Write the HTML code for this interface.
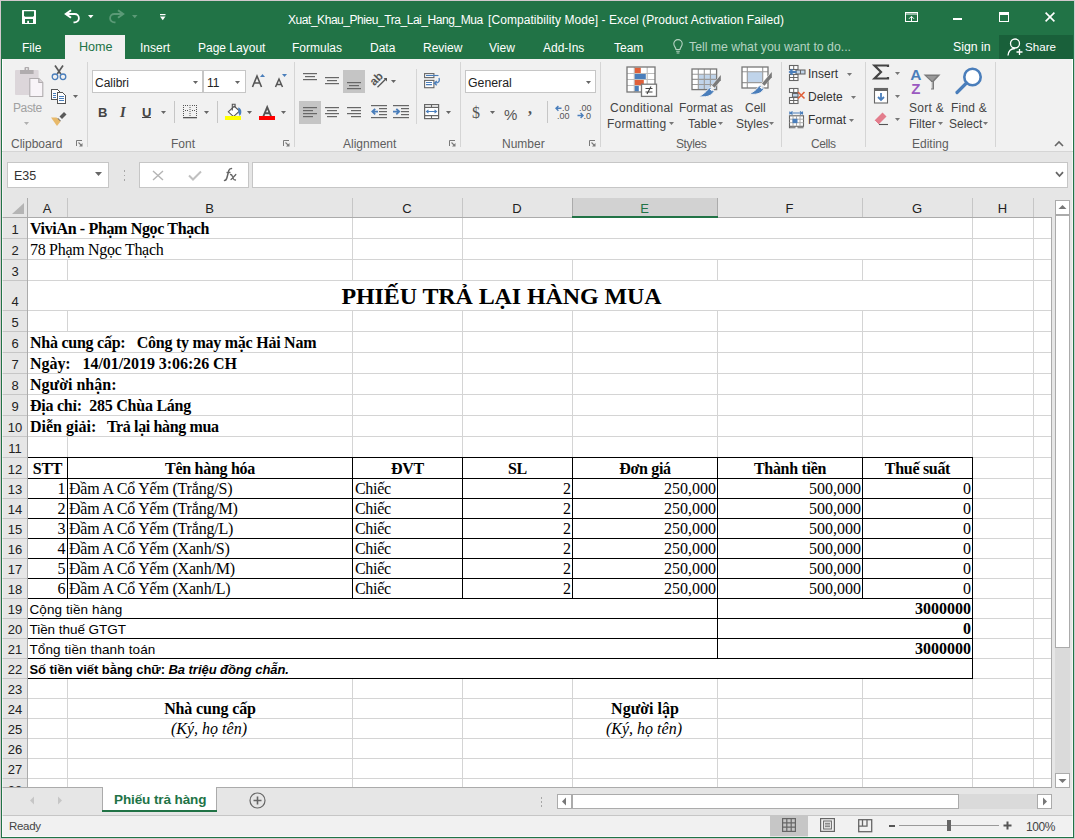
<!DOCTYPE html><html><head><meta charset='utf-8'><style>
*{margin:0;padding:0;box-sizing:border-box}
html,body{width:1075px;height:839px;overflow:hidden;background:#d1c9cd}
body{position:relative;font-family:"Liberation Sans",sans-serif;}
div{position:absolute;white-space:pre;line-height:1}
.ui{font:12px "Liberation Sans",sans-serif;color:#444}
.s{font-family:"Liberation Serif",serif;font-size:16px;color:#000}
.b{font-weight:bold}
.i{font-style:italic}
svg{position:absolute;overflow:visible}
</style></head><body>
<div style="left:1px;top:1px;width:1073px;height:837px;background:#217346"></div>
<div style="left:2px;top:59px;width:1071px;height:92px;background:#f1f1f1"></div>
<div style="left:2px;top:151px;width:1071px;height:1px;background:#d5d5d5"></div>
<div style="left:2px;top:152px;width:1071px;height:46px;background:#e6e6e6"></div>
<div style="left:2px;top:198px;width:1071px;height:19px;background:#e6e6e6"></div>
<div style="left:28px;top:218px;width:1023px;height:569px;background:#fff"></div>
<div style="left:2px;top:218px;width:25px;height:569px;background:#e6e6e6"></div>
<div style="left:1052px;top:198px;width:21px;height:589px;background:#e6e6e6"></div>
<div style="left:2px;top:787px;width:1071px;height:28px;background:#e6e6e6"></div>
<div style="left:2px;top:815px;width:1071px;height:1px;background:#c6c6c6"></div>
<div style="left:2px;top:816px;width:1071px;height:21px;background:#f1f1f1"></div>
<svg style="left:22px;top:10px" width="14" height="14" viewBox="0 0 14 14"><rect x="0" y="0" width="14" height="14" rx="0.6" fill="#fff"/><path d="M2 1.2h10v4.6l-1 1H3l-1-1z" fill="#217346"/><rect x="3" y="9" width="8" height="4" fill="#217346"/><rect x="5.2" y="10.8" width="1.8" height="2.4" fill="#fff"/></svg>
<svg style="left:64px;top:9px" width="17" height="15" viewBox="0 0 17 15"><path d="M7 1.2 1.8 5 7 8.8" fill="none" stroke="#fff" stroke-width="2"/><path d="M2 5h8.7a4.2 4.2 0 0 1 0 8.4H9.5" fill="none" stroke="#fff" stroke-width="1.8"/></svg>
<svg style="left:88px;top:15px" width="6" height="4"><polygon points="0,0 5.5,0 2.75,3.2" fill="#fff"/></svg>
<svg style="left:108px;top:9px" width="17" height="15" viewBox="0 0 17 15"><path d="M10 1.2 15.2 5 10 8.8" fill="none" stroke="#5b9a77" stroke-width="2"/><path d="M15 5H6.3a4.2 4.2 0 0 0 0 8.4H7.5" fill="none" stroke="#5b9a77" stroke-width="1.8"/></svg>
<svg style="left:132px;top:15px" width="6" height="4"><polygon points="0,0 5.5,0 2.75,3.2" fill="#5b9a77"/></svg>
<svg style="left:160px;top:14px" width="6" height="7"><rect x="0" y="0" width="5.5" height="1.2" fill="#fff"/><polygon points="0,2.6 5.5,2.6 2.75,6.2" fill="#fff"/></svg>
<div class="ui" style="left:288px;top:13px;color:#fff;font-size:12px;letter-spacing:-0.45px">Xuat_Khau_Phieu_Tra_Lai_Hang_Mua</div>
<div class="ui" style="left:488px;top:13px;color:#fff;font-size:12px;letter-spacing:0.07px">[Compatibility Mode] - Excel (Product Activation Failed)</div>
<svg style="left:905px;top:12px" width="13" height="10" viewBox="0 0 13 10"><rect x="0.5" y="0.5" width="12" height="9" fill="none" stroke="#fff"/><path d="M0.5 2h12" stroke="#fff"/><path d="M6.5 9.5V4.5M4 6.8 6.5 4.3 9 6.8" fill="none" stroke="#fff"/></svg>
<div style="left:953px;top:18px;width:9px;height:2px;background:#fff"></div>
<svg style="left:999px;top:12px" width="10" height="10" viewBox="0 0 10 10"><rect x="0.5" y="0.5" width="9" height="9" fill="none" stroke="#fff"/><rect x="0" y="0" width="10" height="3" fill="#fff"/></svg>
<svg style="left:1045px;top:12px" width="10" height="10" viewBox="0 0 10 10"><path d="M0.6 0.6 9.4 9.4M9.4 0.6 0.6 9.4" stroke="#fff" stroke-width="1.6"/></svg>
<div style="left:65px;top:35px;width:60px;height:24px;background:#f1f1f1"></div>
<div class="ui" style="left:22px;top:41px;color:#fff;font-size:12px">File</div>
<div class="ui" style="left:79px;top:40px;color:#217346;font-size:12.6px">Home</div>
<div class="ui" style="left:140px;top:41px;color:#fff;font-size:12px">Insert</div>
<div class="ui" style="left:198px;top:41px;color:#fff;font-size:12px">Page Layout</div>
<div class="ui" style="left:292px;top:41px;color:#fff;font-size:12px">Formulas</div>
<div class="ui" style="left:370px;top:41px;color:#fff;font-size:12px">Data</div>
<div class="ui" style="left:423px;top:41px;color:#fff;font-size:12px">Review</div>
<div class="ui" style="left:489px;top:41px;color:#fff;font-size:12px">View</div>
<div class="ui" style="left:543px;top:41px;color:#fff;font-size:12px">Add-Ins</div>
<div class="ui" style="left:614px;top:41px;color:#fff;font-size:12px">Team</div>
<svg style="left:673px;top:39px" width="10" height="15" viewBox="0 0 10 15"><path d="M3 10.5C3 8.5 0.8 7.5 0.8 4.8a4.2 4.2 0 0 1 8.4 0C9.2 7.5 7 8.5 7 10.5z" fill="none" stroke="#b5d3c2" stroke-width="1.1"/><path d="M3.2 12.3h3.6M3.6 14h2.8" stroke="#b5d3c2" stroke-width="1.1"/></svg>
<div class="ui" style="left:689px;top:40px;color:#b5d3c2;font-size:12.3px">Tell me what you want to do...</div>
<div class="ui" style="left:953px;top:40px;color:#fff;font-size:12.3px">Sign in</div>
<div style="left:999px;top:35px;width:74px;height:24px;background:#19603a"></div>
<svg style="left:1007px;top:38px" width="16" height="18" viewBox="0 0 16 18"><circle cx="8" cy="5.5" r="4.5" fill="none" stroke="#fff" stroke-width="1.3"/><path d="M1 17.5C1.5 12.5 4 10.5 8 10.5" fill="none" stroke="#fff" stroke-width="1.3"/><path d="M9.5 14h6M12.5 11v6" stroke="#fff" stroke-width="1.3"/></svg>
<div class="ui" style="left:1025px;top:40px;color:#fff;font-size:11.6px">Share</div>
<div style="left:87px;top:62px;width:1px;height:85px;background:#d5d5d5"></div>
<div style="left:294px;top:62px;width:1px;height:85px;background:#d5d5d5"></div>
<div style="left:460px;top:62px;width:1px;height:85px;background:#d5d5d5"></div>
<div style="left:600px;top:62px;width:1px;height:85px;background:#d5d5d5"></div>
<div style="left:781px;top:62px;width:1px;height:85px;background:#d5d5d5"></div>
<div style="left:865px;top:62px;width:1px;height:85px;background:#d5d5d5"></div>
<div style="left:995px;top:62px;width:1px;height:85px;background:#d5d5d5"></div>
<div class="ui" style="left:11px;top:137px;color:#5e5e5e;letter-spacing:0px">Clipboard</div>
<div class="ui" style="left:171px;top:137px;color:#5e5e5e;letter-spacing:0px">Font</div>
<div class="ui" style="left:343px;top:137px;color:#5e5e5e;letter-spacing:0px">Alignment</div>
<div class="ui" style="left:502px;top:137px;color:#5e5e5e;letter-spacing:0px">Number</div>
<div class="ui" style="left:676px;top:137px;color:#5e5e5e;letter-spacing:-0.4px">Styles</div>
<div class="ui" style="left:811px;top:137px;color:#5e5e5e;letter-spacing:-0.4px">Cells</div>
<div class="ui" style="left:912px;top:137px;color:#5e5e5e;letter-spacing:0px">Editing</div>
<svg style="left:76px;top:140px" width="7" height="7" viewBox="0 0 7 7"><path d="M0.5 6V0.5H6" fill="none" stroke="#7a7a7a"/><path d="M2.5 2.5 5.5 5.5" stroke="#7a7a7a" stroke-width="1.1"/><polygon points="6.5,3 6.5,6.5 3,6.5" fill="#7a7a7a"/></svg>
<svg style="left:283px;top:140px" width="7" height="7" viewBox="0 0 7 7"><path d="M0.5 6V0.5H6" fill="none" stroke="#7a7a7a"/><path d="M2.5 2.5 5.5 5.5" stroke="#7a7a7a" stroke-width="1.1"/><polygon points="6.5,3 6.5,6.5 3,6.5" fill="#7a7a7a"/></svg>
<svg style="left:449px;top:140px" width="7" height="7" viewBox="0 0 7 7"><path d="M0.5 6V0.5H6" fill="none" stroke="#7a7a7a"/><path d="M2.5 2.5 5.5 5.5" stroke="#7a7a7a" stroke-width="1.1"/><polygon points="6.5,3 6.5,6.5 3,6.5" fill="#7a7a7a"/></svg>
<svg style="left:589px;top:140px" width="7" height="7" viewBox="0 0 7 7"><path d="M0.5 6V0.5H6" fill="none" stroke="#7a7a7a"/><path d="M2.5 2.5 5.5 5.5" stroke="#7a7a7a" stroke-width="1.1"/><polygon points="6.5,3 6.5,6.5 3,6.5" fill="#7a7a7a"/></svg>
<svg style="left:15px;top:67px" width="29" height="31" viewBox="0 0 29 31"><rect x="0" y="3" width="23.6" height="25" rx="1" fill="#dcd6da"/><path d="M5 3h13.6v4H5z" fill="#b0acae"/><rect x="9.5" y="0" width="4.6" height="4" rx="1" fill="#b0acae"/><rect x="11" y="1.2" width="1.6" height="1.6" fill="#f1f1f1"/><path d="M14.8 11.5h9l4 4v14h-13z" fill="#f8f4f8" stroke="#b0acae" stroke-width="1.1"/><path d="M23.8 11.5v4h4" fill="#dcd6da" stroke="#b0acae" stroke-width="1.1"/></svg>
<div class="ui" style="left:13px;top:101px;color:#a0a0a0;letter-spacing:-0.4px">Paste</div>
<svg style="left:24px;top:122px" width="5" height="3"><polygon points="0,0 5,0 2.5,3" fill="#b0b0b0"/></svg>
<svg style="left:51px;top:64px" width="16" height="17" viewBox="0 0 16 17"><path d="M4 1.5 9.8 10M12 1.5 6.2 10" stroke="#5a5a5a" stroke-width="1.7" fill="none"/><circle cx="4" cy="12.8" r="2.8" fill="none" stroke="#4a7ebb" stroke-width="1.3"/><circle cx="12" cy="12.8" r="2.8" fill="none" stroke="#4a7ebb" stroke-width="1.3"/></svg>
<svg style="left:51px;top:89px" width="16" height="15" viewBox="0 0 16 15" shape-rendering="crispEdges"><path d="M0.5 0.5h6l2 2v8H0.5z" fill="#fff" stroke="#555"/><rect x="2" y="4" width="3" height="1" fill="#4a7ebb"/><rect x="2" y="6" width="3" height="1" fill="#4a7ebb"/><rect x="2" y="8" width="3" height="1" fill="#4a7ebb"/><path d="M6.5 3.5h5l3 3v8h-8z" fill="#fff" stroke="#555"/><rect x="8" y="7" width="5" height="1" fill="#4a7ebb"/><rect x="8" y="9" width="5" height="1" fill="#4a7ebb"/><rect x="8" y="11" width="5" height="1" fill="#4a7ebb"/></svg>
<svg style="left:73px;top:95px" width="5" height="3"><polygon points="0,0 5,0 2.5,3" fill="#666"/></svg>
<svg style="left:51px;top:111px" width="17" height="16" viewBox="0 0 17 16"><path d="M8.5 5.5 13 1l2.5 2.5L11 8z" fill="#5a5a5a"/><path d="M7 7l2.8 2.8-1.5 1.5L5.5 8.5z" fill="#5a5a5a"/><path d="M0 6.5h5.5l4 4-3.5 4.5z" fill="#e8b96a"/></svg>
<div style="left:92px;top:70px;width:111px;height:23px;background:#fff;border:1px solid #c6c6c6"></div>
<div style="left:203px;top:70px;width:43px;height:23px;background:#fff;border:1px solid #c6c6c6"></div>
<div class="ui" style="left:95px;top:76px;font-size:12px;color:#222">Calibri</div>
<div class="ui" style="left:207px;top:76px;font-size:12px;color:#222">11</div>
<svg style="left:193px;top:81px" width="5" height="3"><polygon points="0,0 5,0 2.5,3" fill="#666"/></svg>
<svg style="left:235px;top:81px" width="5" height="3"><polygon points="0,0 5,0 2.5,3" fill="#666"/></svg>
<svg style="left:251px;top:73px" width="38" height="15" viewBox="0 0 38 15"><path d="M1.5 14 6 3l4.5 11M3.2 10h5.6" fill="none" stroke="#555" stroke-width="1.6"/><polygon points="9,4 14,4 11.5,1" fill="#4a7ebb"/><path d="M24.5 14 28 6l3.5 8M25.8 11.5h4.4" fill="none" stroke="#555" stroke-width="1.5"/><polygon points="31,1 36,1 33.5,4" fill="#4a7ebb"/></svg>
<div style="left:98px;top:105px;font:bold 13px 'Liberation Sans',sans-serif;color:#444">B</div>
<div style="left:120px;top:104px;font:italic bold 14.5px 'Liberation Serif',serif;color:#444">I</div>
<div style="left:142px;top:105px;font:bold 13px 'Liberation Sans',sans-serif;color:#444">U</div>
<div style="left:142px;top:117px;width:9px;height:1px;background:#444"></div>
<svg style="left:161px;top:111px" width="5" height="3"><polygon points="0,0 5,0 2.5,3" fill="#666"/></svg>
<div style="left:174px;top:101px;width:1px;height:22px;background:#c6c6c6"></div>
<svg style="left:183px;top:105px" width="14" height="14"><rect x="0" y="0" width="1" height="1" fill="#555"/><rect x="6.5" y="0" width="1" height="1" fill="#555"/><rect x="13" y="0" width="1" height="1" fill="#555"/><rect x="0" y="2" width="1" height="1" fill="#555"/><rect x="6.5" y="2" width="1" height="1" fill="#555"/><rect x="13" y="2" width="1" height="1" fill="#555"/><rect x="0" y="4" width="1" height="1" fill="#555"/><rect x="6.5" y="4" width="1" height="1" fill="#555"/><rect x="13" y="4" width="1" height="1" fill="#555"/><rect x="0" y="6" width="1" height="1" fill="#555"/><rect x="6.5" y="6" width="1" height="1" fill="#555"/><rect x="13" y="6" width="1" height="1" fill="#555"/><rect x="0" y="8" width="1" height="1" fill="#555"/><rect x="6.5" y="8" width="1" height="1" fill="#555"/><rect x="13" y="8" width="1" height="1" fill="#555"/><rect x="0" y="10" width="1" height="1" fill="#555"/><rect x="6.5" y="10" width="1" height="1" fill="#555"/><rect x="13" y="10" width="1" height="1" fill="#555"/><rect x="2" y="0" width="1" height="1" fill="#555"/><rect x="4" y="0" width="1" height="1" fill="#555"/><rect x="9" y="0" width="1" height="1" fill="#555"/><rect x="11" y="0" width="1" height="1" fill="#555"/><rect x="2" y="5" width="1" height="1" fill="#555"/><rect x="4" y="5" width="1" height="1" fill="#555"/><rect x="9" y="5" width="1" height="1" fill="#555"/><rect x="11" y="5" width="1" height="1" fill="#555"/><rect x="0" y="12" width="14" height="1.3" fill="#555"/></svg>
<svg style="left:204px;top:111px" width="5" height="3"><polygon points="0,0 5,0 2.5,3" fill="#666"/></svg>
<div style="left:217px;top:101px;width:1px;height:22px;background:#c6c6c6"></div>
<svg style="left:225px;top:103px" width="17" height="18" viewBox="0 0 17 18"><path d="M3.3 8.8 9.2 3.3 14.6 8 8.5 13.6z" fill="#fff" stroke="#555" stroke-width="1.1"/><path d="M7.3 7.5V1.2h2.8v3.4" fill="none" stroke="#555" stroke-width="1.1"/><path d="M13.2 4.6c2.5.5 3.8 3.2 2.8 6.5l-1.4 1.8-1.2-3.2z" fill="#4a7ebb"/><rect x="0" y="13" width="16" height="4" fill="#ffff00"/></svg>
<svg style="left:247px;top:111px" width="5" height="3"><polygon points="0,0 5,0 2.5,3" fill="#666"/></svg>
<svg style="left:259px;top:105px" width="17" height="16" viewBox="0 0 17 16"><path d="M4.3 11.5 8.2 2.2l3.9 9.3M5.6 8.3h5.2" fill="none" stroke="#555" stroke-width="1.9"/><rect x="0" y="11" width="16" height="4" fill="#ff0000"/></svg>
<svg style="left:281px;top:111px" width="5" height="3"><polygon points="0,0 5,0 2.5,3" fill="#666"/></svg>
<div style="left:343px;top:70px;width:22px;height:23px;background:#c5c5c5"></div>
<div style="left:299px;top:101px;width:22px;height:23px;background:#c5c5c5"></div>
<svg style="left:303px;top:73px" width="18" height="16"><rect x="0" y="0" width="14" height="1.2" fill="#676767"/><rect x="2" y="3" width="10" height="1.2" fill="#676767"/><rect x="0" y="6" width="14" height="1.2" fill="#676767"/></svg>
<svg style="left:325px;top:77px" width="18" height="16"><rect x="0" y="0" width="14" height="1.2" fill="#676767"/><rect x="2" y="3" width="10" height="1.2" fill="#676767"/><rect x="0" y="6" width="14" height="1.2" fill="#676767"/></svg>
<svg style="left:347px;top:82px" width="18" height="16"><rect x="0" y="0" width="14" height="1.2" fill="#676767"/><rect x="2" y="3" width="10" height="1.2" fill="#676767"/><rect x="0" y="6" width="14" height="1.2" fill="#676767"/></svg>
<svg style="left:303px;top:107px" width="18" height="16"><rect x="0" y="0" width="14" height="1.2" fill="#676767"/><rect x="0" y="3" width="10" height="1.2" fill="#676767"/><rect x="0" y="6" width="14" height="1.2" fill="#676767"/><rect x="0" y="9" width="10" height="1.2" fill="#676767"/></svg>
<svg style="left:325px;top:107px" width="18" height="16"><rect x="0" y="0" width="14" height="1.2" fill="#676767"/><rect x="2" y="3" width="10" height="1.2" fill="#676767"/><rect x="0" y="6" width="14" height="1.2" fill="#676767"/><rect x="2" y="9" width="10" height="1.2" fill="#676767"/></svg>
<svg style="left:347px;top:107px" width="18" height="16"><rect x="0" y="0" width="14" height="1.2" fill="#676767"/><rect x="4" y="3" width="10" height="1.2" fill="#676767"/><rect x="0" y="6" width="14" height="1.2" fill="#676767"/><rect x="4" y="9" width="10" height="1.2" fill="#676767"/></svg>
<svg style="left:371px;top:105px" width="17" height="14"><rect x="0" y="0" width="16" height="1.2" fill="#676767"/><rect x="8" y="3" width="8" height="1.2" fill="#676767"/><rect x="8" y="6" width="8" height="1.2" fill="#676767"/><rect x="8" y="9" width="8" height="1.2" fill="#676767"/><rect x="0" y="12" width="16" height="1.2" fill="#676767"/><path d="M7 6.6H1.5M4.2 3.8 1.3 6.6 4.2 9.4" fill="none" stroke="#4a7ebb" stroke-width="1.8"/></svg>
<svg style="left:393px;top:105px" width="17" height="14"><rect x="0" y="0" width="16" height="1.2" fill="#676767"/><rect x="8" y="3" width="8" height="1.2" fill="#676767"/><rect x="8" y="6" width="8" height="1.2" fill="#676767"/><rect x="8" y="9" width="8" height="1.2" fill="#676767"/><rect x="0" y="12" width="16" height="1.2" fill="#676767"/><path d="M0 6.6H6M3.3 3.8 6.2 6.6 3.3 9.4" fill="none" stroke="#4a7ebb" stroke-width="1.8"/></svg>
<svg style="left:366px;top:68px" width="24" height="24" viewBox="0 0 24 24"><text x="0" y="0" transform="translate(8.2,18.2) rotate(-45)" font-family="Liberation Sans" font-weight="bold" font-size="11.5" fill="#555">ab</text><path d="M11.5 19.3 19.8 11" fill="none" stroke="#555" stroke-width="1.3"/><polygon points="17.6,10 21,10 21,13.4" fill="#555"/></svg>
<svg style="left:391px;top:80px" width="5" height="3"><polygon points="0,0 5,0 2.5,3" fill="#666"/></svg>
<div style="left:416px;top:69px;width:1px;height:55px;background:#d5d5d5"></div>
<svg style="left:424px;top:73px" width="17" height="16" viewBox="0 0 17 16"><rect x="0.6" y="0.6" width="9.3" height="4" fill="#fff" stroke="#666" stroke-width="1.1"/><path d="M2 2.5h12.5" stroke="#4a7ebb" stroke-width="1.1"/><rect x="0.6" y="7.4" width="9.3" height="7.3" fill="#fff" stroke="#666" stroke-width="1.1"/><path d="M2 9.5h6M2 11.6h6" stroke="#4a7ebb" stroke-width="1.1"/><path d="M15 5c1 3 0 5-4 5.2M12.8 8 10.3 10.2 12.8 12.2" fill="none" stroke="#4a7ebb" stroke-width="1.3"/></svg>
<svg style="left:424px;top:104px" width="16" height="16" viewBox="0 0 16 16"><rect x="0.6" y="0.6" width="14" height="14" fill="#fff" stroke="#666" stroke-width="1.2"/><path d="M0.6 3.4h14M0.6 11.6h14M7.5 0.6v2.8M7.5 11.6v3" stroke="#666" stroke-width="1.1"/><path d="M2.5 7.5h10M4.5 5.8 2.5 7.5 4.5 9.2M10.5 5.8 12.5 7.5 10.5 9.2" fill="none" stroke="#4a7ebb" stroke-width="1.1"/></svg>
<svg style="left:446px;top:111px" width="5" height="3"><polygon points="0,0 5,0 2.5,3" fill="#666"/></svg>
<div style="left:465px;top:70px;width:131px;height:23px;background:#fff;border:1px solid #c6c6c6"></div>
<div class="ui" style="left:468px;top:76px;font-size:12.3px;color:#222">General</div>
<svg style="left:586px;top:81px" width="5" height="3"><polygon points="0,0 5,0 2.5,3" fill="#666"/></svg>
<div style="left:472px;top:104px;font:16px 'Liberation Serif',serif;color:#555">$</div>
<svg style="left:490px;top:111px" width="5" height="3"><polygon points="0,0 5,0 2.5,3" fill="#666"/></svg>
<div style="left:504px;top:106px;font:15px 'Liberation Sans',sans-serif;color:#555">%</div>
<div style="left:528px;top:100px;font:bold 16px 'Liberation Serif',serif;color:#555">,</div>
<div style="left:547px;top:101px;width:1px;height:22px;background:#c6c6c6"></div>
<svg style="left:555px;top:104px" width="16" height="15" viewBox="0 0 16 15"><path d="M6.5 4.3H1M3.4 1.9 1 4.3 3.4 6.7" fill="none" stroke="#4a7ebb" stroke-width="1.4"/><text x="7" y="7" font-family="Liberation Sans" font-size="9" fill="#555">.0</text><text x="2" y="14.5" font-family="Liberation Sans" font-size="9" fill="#555">.00</text></svg>
<svg style="left:577px;top:104px" width="16" height="15" viewBox="0 0 16 15"><text x="2" y="7" font-family="Liberation Sans" font-size="9" fill="#555">.00</text><path d="M0.5 11.5H6M3.6 9.1 6 11.5 3.6 13.9" fill="none" stroke="#4a7ebb" stroke-width="1.4"/><text x="6.5" y="14.5" font-family="Liberation Sans" font-size="9" fill="#555">.0</text></svg>
<svg style="left:626px;top:66px" width="32" height="32" viewBox="0 0 32 32"><rect x="1" y="1" width="28" height="25" fill="#fff"/><path d="M8.3 1v25M21.2 1v25M1 7.5h28M1 13.5h28M1 19.5h28" stroke="#bdbdbd" stroke-width="1.1"/><rect x="8.8" y="1.6" width="6" height="5.4" fill="#e0603a"/><rect x="8.8" y="8" width="11" height="5" fill="#4a7ebb"/><rect x="8.8" y="14" width="9" height="5" fill="#e0603a"/><rect x="8.8" y="20" width="4" height="5.5" fill="#4a7ebb"/><rect x="1" y="1" width="28" height="25" fill="none" stroke="#777" stroke-width="1.3"/><rect x="15.5" y="18.2" width="15" height="12.2" fill="#fff" stroke="#777" stroke-width="1.3"/><path d="M19.5 22.5h7M19.5 26h7M25 20.5 21 28" stroke="#444" stroke-width="1.1"/></svg>
<svg style="left:691px;top:68px" width="31" height="30" viewBox="0 0 31 30"><rect x="1" y="1" width="24.6" height="20.6" fill="#fff"/><rect x="7.5" y="6.5" width="18" height="15" fill="#c0d4ea"/><path d="M7.3 1v20.6M13.3 1v20.6M19.4 1v20.6M1 6.3h24.6M1 11.4h24.6M1 16.5h24.6" stroke="#9a9a9a" stroke-width="1.1"/><rect x="1" y="1" width="24.6" height="20.6" fill="none" stroke="#777" stroke-width="1.3"/><path d="M29.5 6.5 19 19.5l3.5 2.5L30 12z" fill="#f1f1f1"/><path d="M29.8 7 21 17.5l2.5 2.2 6.3-7.5z" fill="#7a7a7a"/><path d="M19.2 19.3c-2.5 1.5-3 3.5-5 5l-6.2 4.7 6.5-.3c3.5-.2 6.5-2 8.7-5.5z" fill="#4a7ebb" stroke="#f1f1f1" stroke-width="1"/><path d="M19 21.2c1 .2 2 .8 2.3 2" stroke="#fff" stroke-width="1.3" fill="none"/></svg>
<svg style="left:741px;top:66px" width="31" height="30" viewBox="0 0 31 30"><rect x="1" y="1" width="26" height="21" fill="#fff"/><rect x="6.5" y="6" width="15" height="10.5" fill="#c0d4ea"/><path d="M6.3 1v21M21.7 1v21M1 5.8h26M1 16.6h26" stroke="#9a9a9a" stroke-width="1.1"/><rect x="1" y="1" width="26" height="21" fill="none" stroke="#777" stroke-width="1.3"/><path d="M30.5 5.5 19 19l3.5 2.5 8-10z" fill="#f1f1f1"/><path d="M30.8 6 21 17.5l2.5 2.2 7.3-8.5z" fill="#7a7a7a"/><path d="M19.2 19.3c-2.5 1.5-3 3.5-5 5l-6.2 4.2 6.5-.3c3.5-.2 6.5-2 8.7-5.5z" fill="#4a7ebb" stroke="#f1f1f1" stroke-width="1"/><path d="M19 21.2c1 .2 2 .8 2.3 2" stroke="#fff" stroke-width="1.3" fill="none"/></svg>
<div class="ui" style="left:610px;top:101px;letter-spacing:0.3px">Conditional</div>
<div class="ui" style="left:607px;top:117px;letter-spacing:0.2px">Formatting</div>
<svg style="left:669px;top:122px" width="5" height="3"><polygon points="0,0 5,0 2.5,3" fill="#777"/></svg>
<div class="ui" style="left:679px;top:101px;">Format as</div>
<div class="ui" style="left:688px;top:117px;">Table</div>
<svg style="left:718px;top:122px" width="5" height="3"><polygon points="0,0 5,0 2.5,3" fill="#777"/></svg>
<div class="ui" style="left:745px;top:101px;">Cell</div>
<div class="ui" style="left:736px;top:117px;">Styles</div>
<svg style="left:769px;top:122px" width="5" height="3"><polygon points="0,0 5,0 2.5,3" fill="#777"/></svg>
<svg style="left:788px;top:64px" width="18" height="18" viewBox="0 0 18 18"><rect x="1.5" y="1.5" width="8.5" height="4" fill="#fff" stroke="#666" stroke-width="1.1"/><path d="M5.7 1.5v4" stroke="#666"/><rect x="1.5" y="10.5" width="8.5" height="6" fill="#fff" stroke="#666" stroke-width="1.1"/><path d="M1.5 13.5h8.5M5.7 10.5v6" stroke="#666"/><rect x="8" y="6" width="9" height="4" fill="#c0d4ea" stroke="#666" stroke-width="1.1"/><path d="M12.5 6v4" stroke="#666"/><path d="M8.5 8H2M4.5 5.3 1.8 8 4.5 10.7" fill="none" stroke="#4a7ebb" stroke-width="1.8"/></svg>
<svg style="left:788px;top:87px" width="18" height="18" viewBox="0 0 18 18"><rect x="1.5" y="1.5" width="8.5" height="4" fill="#fff" stroke="#666" stroke-width="1.1"/><path d="M5.7 1.5v4" stroke="#666"/><rect x="1.5" y="10.5" width="8.5" height="6" fill="#fff" stroke="#666" stroke-width="1.1"/><path d="M1.5 13.5h8.5M5.7 10.5v6" stroke="#666"/><rect x="4.5" y="6.5" width="5.5" height="3.5" fill="#c0d4ea" stroke="#666" stroke-width="1.1"/><path d="M10 5 16.5 11.5M16.5 5 10 11.5" stroke="#e0603a" stroke-width="1.6"/></svg>
<svg style="left:788px;top:111px" width="18" height="18" viewBox="0 0 18 18"><path d="M1.8 0.5v3M14.5 0.5v3M2.5 2h11.5M4.5 0.3 2.5 2 4.5 3.7M12 0.3 14 2 12 3.7" fill="none" stroke="#4a7ebb" stroke-width="1.1"/><rect x="1.5" y="4.8" width="14" height="10.5" fill="#fff" stroke="#666" stroke-width="1.1"/><path d="M1.5 8.2h14M1.5 11.7h14M5 4.8v10.5M8.5 4.8v10.5M12 4.8v10.5" stroke="#aaa" stroke-width="1"/><rect x="4.5" y="7.8" width="5" height="4.3" fill="#4a7ebb"/><path d="M1.5 15.3v1.5h6M9.5 16.8h6" stroke="#666" stroke-width="1.1" fill="none"/></svg>
<div class="ui" style="left:808px;top:67px;color:#333">Insert</div>
<div class="ui" style="left:808px;top:90px;color:#333">Delete</div>
<div class="ui" style="left:808px;top:113px;color:#333">Format</div>
<svg style="left:847px;top:73px" width="5" height="3"><polygon points="0,0 5,0 2.5,3" fill="#777"/></svg>
<svg style="left:851px;top:96px" width="5" height="3"><polygon points="0,0 5,0 2.5,3" fill="#777"/></svg>
<svg style="left:849px;top:119px" width="5" height="3"><polygon points="0,0 5,0 2.5,3" fill="#777"/></svg>
<svg style="left:873px;top:64px" width="16" height="16" viewBox="0 0 16 16"><path d="M15 3V1.5H1.5L8 8l-6.5 6.5H15V13" fill="none" stroke="#444" stroke-width="2.2"/></svg>
<svg style="left:895px;top:72px" width="5" height="3"><polygon points="0,0 5,0 2.5,3" fill="#777"/></svg>
<svg style="left:873px;top:87px" width="16" height="17" viewBox="0 0 16 17"><rect x="1.5" y="1.5" width="13" height="14.5" fill="#fff" stroke="#666" stroke-width="1.1"/><rect x="1" y="1" width="14" height="3" fill="#666"/><path d="M8 6v7M5 10 8 13 11 10" fill="none" stroke="#4a7ebb" stroke-width="1.8"/></svg>
<svg style="left:895px;top:95px" width="5" height="3"><polygon points="0,0 5,0 2.5,3" fill="#777"/></svg>
<svg style="left:873px;top:111px" width="16" height="15" viewBox="0 0 16 15"><path d="M1.5 9.5 9.5 1.5l4 4-8 8z" fill="#e37d8c"/><path d="M1.5 9.5l4 4" stroke="#f1f1f1" stroke-width="1"/><path d="M6 13.5h9" stroke="#555" stroke-width="1.1"/></svg>
<svg style="left:895px;top:118px" width="5" height="3"><polygon points="0,0 5,0 2.5,3" fill="#777"/></svg>
<svg style="left:910px;top:67px" width="32" height="28" viewBox="0 0 32 28"><text x="0.3" y="12.8" font-family="Liberation Sans" font-weight="bold" font-size="15.5" fill="#4a7ebb">A</text><text x="1.2" y="26.9" font-family="Liberation Sans" font-weight="bold" font-size="15" fill="#9b59c0">Z</text><path d="M13.5 7.5h17l-6.5 7v8h-3v-8z" fill="#7a7a7a"/><path d="M16.5 9h10.5l-4.7 5" fill="#999"/><rect x="21.2" y="15" width="1.2" height="6.5" fill="#f1f1f1"/></svg>
<svg style="left:954px;top:66px" width="30" height="30" viewBox="0 0 30 30"><circle cx="18.5" cy="11" r="8.2" fill="#fff" stroke="#4a7ebb" stroke-width="2.6"/><path d="M12.5 17 3 26.5" stroke="#4a7ebb" stroke-width="3.2" stroke-linecap="round"/></svg>
<div class="ui" style="left:909px;top:101px;letter-spacing:0.3px">Sort &amp;</div>
<div class="ui" style="left:909px;top:117px;">Filter</div>
<svg style="left:938px;top:122px" width="5" height="3"><polygon points="0,0 5,0 2.5,3" fill="#777"/></svg>
<div class="ui" style="left:951px;top:101px;letter-spacing:0.2px">Find &amp;</div>
<div class="ui" style="left:949px;top:117px;">Select</div>
<svg style="left:983px;top:122px" width="5" height="3"><polygon points="0,0 5,0 2.5,3" fill="#777"/></svg>
<svg style="left:1054px;top:140px" width="10" height="7"><path d="M1 6 5 2l4 4" fill="none" stroke="#666" stroke-width="1.6"/></svg>
<div style="left:7px;top:162px;width:102px;height:26px;background:#fff;border:1px solid #c6c6c6"></div>
<div class="ui" style="left:14px;top:169px;font-size:12.5px;color:#333">E35</div>
<svg style="left:95px;top:172px" width="7" height="4"><polygon points="0,0 7,0 3.5,4" fill="#666"/></svg>
<div style="left:123.5px;top:170px;width:1.5px;height:1.5px;background:#a6a6a6"></div>
<div style="left:123.5px;top:174.5px;width:1.5px;height:1.5px;background:#a6a6a6"></div>
<div style="left:123.5px;top:179px;width:1.5px;height:1.5px;background:#a6a6a6"></div>
<div style="left:139px;top:162px;width:110px;height:26px;background:#fff;border:1px solid #c6c6c6"></div>
<svg style="left:152px;top:170px" width="12" height="11"><path d="M1 1 11 10M11 1 1 10" stroke="#b4b4b4" stroke-width="1.4"/></svg>
<svg style="left:188px;top:170px" width="14" height="11"><path d="M1 5.5 5 9.5 13 1.5" fill="none" stroke="#c0c0c0" stroke-width="2"/></svg>
<svg style="left:222px;top:167px" width="16" height="15" viewBox="0 0 16 15"><path d="M2.5 13.5c1.5 0 2-1 2.5-3L6.8 3.5C7.3 2 8 1.5 9.5 1.5" fill="none" stroke="#666" stroke-width="1.5" stroke-linecap="round"/><path d="M4.5 5.5h4" stroke="#666" stroke-width="1.3"/><path d="M8.5 7.5c1 0 1.5.5 2 2l1 2.5c.5 1 1 1 2 1M9 12.5c1.5-1 3-3 4.8-5" fill="none" stroke="#666" stroke-width="1.3" stroke-linecap="round"/></svg>
<div style="left:252px;top:162px;width:816px;height:26px;background:#fff;border:1px solid #c6c6c6"></div>
<svg style="left:1055px;top:171px" width="9" height="7"><path d="M1 1.2 4.5 5 8 1.2" fill="none" stroke="#666" stroke-width="1.8"/></svg>
<div class="s" style="left:30px;top:221px;letter-spacing:-0.35px;font-weight:bold;">ViviAn - Phạm Ngọc Thạch</div>
<div class="s" style="left:30px;top:242px;letter-spacing:-0.3px;">78 Phạm Ngọc Thạch</div>
<div class="s" style="left:29px;width:945px;text-align:center;top:284px;font-size:24px;font-weight:bold;letter-spacing:-0.1px">PHIẾU TRẢ LẠI HÀNG MUA</div>
<div class="s" style="left:30px;top:335px;letter-spacing:-0.25px;font-weight:bold;">Nhà cung cấp:   Công ty may mặc Hải Nam</div>
<div class="s" style="left:30px;top:356px;letter-spacing:-0.05px;font-weight:bold;">Ngày:   14/01/2019 3:06:26 CH</div>
<div class="s" style="left:30px;top:377px;font-weight:bold;">Người nhận:</div>
<div class="s" style="left:30px;top:398px;letter-spacing:-0.25px;font-weight:bold;">Địa chỉ:  285 Chùa Láng</div>
<div class="s" style="left:30px;top:419px;font-weight:bold;">Diễn giải:</div>
<div class="s" style="left:107px;top:419px;letter-spacing:-0.37px;font-weight:bold;">Trả lại hàng mua</div>
<div class="s" style="left:-152.5px;width:400px;text-align:center;top:461px;letter-spacing:-0.3px;font-weight:bold;">STT</div>
<div class="s" style="left:10.0px;width:400px;text-align:center;top:461px;letter-spacing:-0.3px;font-weight:bold;">Tên hàng hóa</div>
<div class="s" style="left:207.5px;width:400px;text-align:center;top:461px;letter-spacing:-0.3px;font-weight:bold;">ĐVT</div>
<div class="s" style="left:317.5px;width:400px;text-align:center;top:461px;letter-spacing:-0.3px;font-weight:bold;">SL</div>
<div class="s" style="left:445.0px;width:400px;text-align:center;top:461px;letter-spacing:-0.3px;font-weight:bold;">Đơn giá</div>
<div class="s" style="left:590.0px;width:400px;text-align:center;top:461px;letter-spacing:-0.3px;font-weight:bold;">Thành tiền</div>
<div class="s" style="left:717.5px;width:400px;text-align:center;top:461px;letter-spacing:-0.3px;font-weight:bold;">Thuế suất</div>
<div class="s" style="right:1009.5px;top:481px;">1</div>
<div class="s" style="left:69px;top:481px;letter-spacing:-0.2px;">Đầm A Cổ Yếm (Trắng/S)</div>
<div class="s" style="left:355px;top:481px;letter-spacing:-0.3px;">Chiếc</div>
<div class="s" style="right:504px;top:481px;">2</div>
<div class="s" style="right:359px;top:481px;">250,000</div>
<div class="s" style="right:214px;top:481px;">500,000</div>
<div class="s" style="right:104px;top:481px;">0</div>
<div class="s" style="right:1009.5px;top:501px;">2</div>
<div class="s" style="left:69px;top:501px;letter-spacing:-0.2px;">Đầm A Cổ Yếm (Trắng/M)</div>
<div class="s" style="left:355px;top:501px;letter-spacing:-0.3px;">Chiếc</div>
<div class="s" style="right:504px;top:501px;">2</div>
<div class="s" style="right:359px;top:501px;">250,000</div>
<div class="s" style="right:214px;top:501px;">500,000</div>
<div class="s" style="right:104px;top:501px;">0</div>
<div class="s" style="right:1009.5px;top:521px;">3</div>
<div class="s" style="left:69px;top:521px;letter-spacing:-0.2px;">Đầm A Cổ Yếm (Trắng/L)</div>
<div class="s" style="left:355px;top:521px;letter-spacing:-0.3px;">Chiếc</div>
<div class="s" style="right:504px;top:521px;">2</div>
<div class="s" style="right:359px;top:521px;">250,000</div>
<div class="s" style="right:214px;top:521px;">500,000</div>
<div class="s" style="right:104px;top:521px;">0</div>
<div class="s" style="right:1009.5px;top:541px;">4</div>
<div class="s" style="left:69px;top:541px;letter-spacing:-0.2px;">Đầm A Cổ Yếm (Xanh/S)</div>
<div class="s" style="left:355px;top:541px;letter-spacing:-0.3px;">Chiếc</div>
<div class="s" style="right:504px;top:541px;">2</div>
<div class="s" style="right:359px;top:541px;">250,000</div>
<div class="s" style="right:214px;top:541px;">500,000</div>
<div class="s" style="right:104px;top:541px;">0</div>
<div class="s" style="right:1009.5px;top:561px;">5</div>
<div class="s" style="left:69px;top:561px;letter-spacing:-0.2px;">Đầm A Cổ Yếm (Xanh/M)</div>
<div class="s" style="left:355px;top:561px;letter-spacing:-0.3px;">Chiếc</div>
<div class="s" style="right:504px;top:561px;">2</div>
<div class="s" style="right:359px;top:561px;">250,000</div>
<div class="s" style="right:214px;top:561px;">500,000</div>
<div class="s" style="right:104px;top:561px;">0</div>
<div class="s" style="right:1009.5px;top:581px;">6</div>
<div class="s" style="left:69px;top:581px;letter-spacing:-0.2px;">Đầm A Cổ Yếm (Xanh/L)</div>
<div class="s" style="left:355px;top:581px;letter-spacing:-0.3px;">Chiếc</div>
<div class="s" style="right:504px;top:581px;">2</div>
<div class="s" style="right:359px;top:581px;">250,000</div>
<div class="s" style="right:214px;top:581px;">500,000</div>
<div class="s" style="right:104px;top:581px;">0</div>
<div style="left:29.5px;top:602px;font:13.5px 'Liberation Sans',sans-serif;color:#000;letter-spacing:0.1px;">Cộng tiền hàng</div>
<div style="left:29.5px;top:622px;font:13.5px 'Liberation Sans',sans-serif;color:#000;letter-spacing:-0.05px;">Tiền thuế GTGT</div>
<div style="left:29.5px;top:642px;font:13.5px 'Liberation Sans',sans-serif;color:#000;letter-spacing:0.1px;">Tổng tiền thanh toán</div>
<div style="left:29.5px;top:662px;font:13.5px 'Liberation Sans',sans-serif;color:#000;letter-spacing:-0.05px;font-weight:bold;font-size:13px">Số tiền viết bằng chữ: <i>Ba triệu đồng chẵn.</i></div>
<div class="s" style="right:104px;top:601px;font-weight:bold;">3000000</div>
<div class="s" style="right:104px;top:621px;font-weight:bold;">0</div>
<div class="s" style="right:104px;top:641px;font-weight:bold;">3000000</div>
<div class="s" style="left:10px;width:400px;text-align:center;top:701px;letter-spacing:-0.15px;font-weight:bold;">Nhà cung cấp</div>
<div class="s" style="left:445px;width:400px;text-align:center;top:701px;font-weight:bold;">Người lập</div>
<div class="s" style="left:9px;width:400px;text-align:center;top:721px;font-style:italic;">(Ký, họ tên)</div>
<div class="s" style="left:444px;width:400px;text-align:center;top:721px;font-style:italic;">(Ký, họ tên)</div>
<div style="left:1055px;top:200px;width:15px;height:587px;background:#dadada"></div>
<div style="left:1055px;top:200px;width:15px;height:15px;background:#fff;border:1px solid #ababab"></div>
<svg style="left:1058px;top:204px" width="9" height="6"><polygon points="0.5,5 8.5,5 4.5,1" fill="#777"/></svg>
<div style="left:1055px;top:214px;width:15px;height:434px;background:#fff;border:1px solid #ababab;border-top-width:2px"></div>
<div style="left:1055px;top:773px;width:15px;height:15px;background:#fff;border:1px solid #ababab"></div>
<svg style="left:1058px;top:778px" width="9" height="6"><polygon points="0.5,1 8.5,1 4.5,5" fill="#777"/></svg>
<div style="left:2px;top:787px;width:1050px;height:1px;background:#ababab"></div>
<svg style="left:29px;top:796px" width="6" height="9"><polygon points="5,0.5 5,8.5 1,4.5" fill="#c6c6c6"/></svg>
<svg style="left:57px;top:796px" width="6" height="9"><polygon points="1,0.5 1,8.5 5,4.5" fill="#c6c6c6"/></svg>
<div style="left:102px;top:787px;width:115px;height:25px;background:#fff;border-left:1px solid #ababab;border-right:1px solid #ababab"></div>
<div style="left:102px;top:810px;width:115px;height:2px;background:#217346"></div>
<div style="left:114px;top:792px;font:bold 13.5px 'Liberation Sans',sans-serif;color:#217346;letter-spacing:-0.1px">Phiếu trả hàng</div>
<svg style="left:249px;top:792px" width="18" height="18"><circle cx="8.5" cy="8.5" r="7.5" fill="none" stroke="#666" stroke-width="1.2"/><path d="M8.5 4.5v8M4.5 8.5h8" stroke="#666" stroke-width="1.6"/></svg>
<div style="left:540.5px;top:797px;width:1.5px;height:1.5px;background:#a6a6a6"></div>
<div style="left:540.5px;top:801px;width:1.5px;height:1.5px;background:#a6a6a6"></div>
<div style="left:540.5px;top:805px;width:1.5px;height:1.5px;background:#a6a6a6"></div>
<div style="left:557px;top:794px;width:495px;height:15px;background:#dadada"></div>
<div style="left:557px;top:794px;width:15px;height:15px;background:#fff;border:1px solid #ababab"></div>
<svg style="left:561px;top:797px" width="6" height="9"><polygon points="5,0.5 5,8.5 1,4.5" fill="#777"/></svg>
<div style="left:571px;top:794px;width:388px;height:15px;background:#fff;border:1px solid #ababab;border-left-width:2px"></div>
<div style="left:1037px;top:794px;width:15px;height:15px;background:#fff;border:1px solid #ababab"></div>
<svg style="left:1042px;top:797px" width="6" height="9"><polygon points="1,0.5 1,8.5 5,4.5" fill="#777"/></svg>
<div class="ui" style="left:9px;top:820px;color:#444;font-size:11.5px;letter-spacing:-0.3px">Ready</div>
<div style="left:770px;top:816px;width:38px;height:21px;background:#c6c6c6"></div>
<svg style="left:782px;top:818px" width="14" height="14"><rect x="0.6" y="0.6" width="12.8" height="12.8" fill="none" stroke="#666" stroke-width="1.2"/><path d="M4.8 0.6v12.8M9.2 0.6v12.8M0.6 4.8h12.8M0.6 9.2h12.8" stroke="#666" stroke-width="1.2"/></svg>
<svg style="left:820px;top:818px" width="15" height="14"><rect x="0.6" y="0.6" width="13.8" height="12.8" fill="none" stroke="#666" stroke-width="1.2"/><rect x="3.6" y="3" width="7.8" height="8" fill="none" stroke="#666" stroke-width="1"/><path d="M5 5.3h5M5 7h5M5 8.7h5" stroke="#666" stroke-width="0.9"/></svg>
<svg style="left:858px;top:819px" width="15" height="14"><rect x="0.7" y="0.7" width="13" height="12" fill="none" stroke="#666" stroke-width="1.3"/><path d="M0.7 7.2h8.3V0.7M4.5 0.7v6.5" fill="none" stroke="#666" stroke-width="1.3"/></svg>
<div style="left:889px;top:825px;width:6px;height:2px;background:#555"></div>
<div style="left:899px;top:825px;width:100px;height:1px;background:#9a9a9a"></div>
<div style="left:947px;top:820px;width:4px;height:11px;background:#666"></div>
<svg style="left:1003px;top:821px" width="9" height="9"><path d="M4.5 0.5v8M0.5 4.5h8" stroke="#555" stroke-width="2"/></svg>
<div class="ui" style="left:1026px;top:820px;color:#444;letter-spacing:-0.4px">100%</div>
<div style="left:352px;top:218px;width:1px;height:20px;background:#d4d4d4"></div>
<div style="left:462px;top:218px;width:1px;height:20px;background:#d4d4d4"></div>
<div style="left:972px;top:218px;width:1px;height:20px;background:#d4d4d4"></div>
<div style="left:1033px;top:218px;width:1px;height:20px;background:#d4d4d4"></div>
<div style="left:352px;top:239px;width:1px;height:20px;background:#d4d4d4"></div>
<div style="left:462px;top:239px;width:1px;height:20px;background:#d4d4d4"></div>
<div style="left:972px;top:239px;width:1px;height:20px;background:#d4d4d4"></div>
<div style="left:1033px;top:239px;width:1px;height:20px;background:#d4d4d4"></div>
<div style="left:67px;top:260px;width:1px;height:20px;background:#d4d4d4"></div>
<div style="left:352px;top:260px;width:1px;height:20px;background:#d4d4d4"></div>
<div style="left:462px;top:260px;width:1px;height:20px;background:#d4d4d4"></div>
<div style="left:572px;top:260px;width:1px;height:20px;background:#d4d4d4"></div>
<div style="left:717px;top:260px;width:1px;height:20px;background:#d4d4d4"></div>
<div style="left:862px;top:260px;width:1px;height:20px;background:#d4d4d4"></div>
<div style="left:972px;top:260px;width:1px;height:20px;background:#d4d4d4"></div>
<div style="left:1033px;top:260px;width:1px;height:20px;background:#d4d4d4"></div>
<div style="left:972px;top:281px;width:1px;height:29px;background:#d4d4d4"></div>
<div style="left:1033px;top:281px;width:1px;height:29px;background:#d4d4d4"></div>
<div style="left:67px;top:311px;width:1px;height:20px;background:#d4d4d4"></div>
<div style="left:352px;top:311px;width:1px;height:20px;background:#d4d4d4"></div>
<div style="left:462px;top:311px;width:1px;height:20px;background:#d4d4d4"></div>
<div style="left:572px;top:311px;width:1px;height:20px;background:#d4d4d4"></div>
<div style="left:717px;top:311px;width:1px;height:20px;background:#d4d4d4"></div>
<div style="left:862px;top:311px;width:1px;height:20px;background:#d4d4d4"></div>
<div style="left:972px;top:311px;width:1px;height:20px;background:#d4d4d4"></div>
<div style="left:1033px;top:311px;width:1px;height:20px;background:#d4d4d4"></div>
<div style="left:352px;top:332px;width:1px;height:20px;background:#d4d4d4"></div>
<div style="left:462px;top:332px;width:1px;height:20px;background:#d4d4d4"></div>
<div style="left:572px;top:332px;width:1px;height:20px;background:#d4d4d4"></div>
<div style="left:717px;top:332px;width:1px;height:20px;background:#d4d4d4"></div>
<div style="left:862px;top:332px;width:1px;height:20px;background:#d4d4d4"></div>
<div style="left:972px;top:332px;width:1px;height:20px;background:#d4d4d4"></div>
<div style="left:1033px;top:332px;width:1px;height:20px;background:#d4d4d4"></div>
<div style="left:352px;top:353px;width:1px;height:20px;background:#d4d4d4"></div>
<div style="left:462px;top:353px;width:1px;height:20px;background:#d4d4d4"></div>
<div style="left:572px;top:353px;width:1px;height:20px;background:#d4d4d4"></div>
<div style="left:717px;top:353px;width:1px;height:20px;background:#d4d4d4"></div>
<div style="left:862px;top:353px;width:1px;height:20px;background:#d4d4d4"></div>
<div style="left:972px;top:353px;width:1px;height:20px;background:#d4d4d4"></div>
<div style="left:1033px;top:353px;width:1px;height:20px;background:#d4d4d4"></div>
<div style="left:352px;top:374px;width:1px;height:20px;background:#d4d4d4"></div>
<div style="left:462px;top:374px;width:1px;height:20px;background:#d4d4d4"></div>
<div style="left:572px;top:374px;width:1px;height:20px;background:#d4d4d4"></div>
<div style="left:717px;top:374px;width:1px;height:20px;background:#d4d4d4"></div>
<div style="left:862px;top:374px;width:1px;height:20px;background:#d4d4d4"></div>
<div style="left:972px;top:374px;width:1px;height:20px;background:#d4d4d4"></div>
<div style="left:1033px;top:374px;width:1px;height:20px;background:#d4d4d4"></div>
<div style="left:352px;top:395px;width:1px;height:20px;background:#d4d4d4"></div>
<div style="left:462px;top:395px;width:1px;height:20px;background:#d4d4d4"></div>
<div style="left:572px;top:395px;width:1px;height:20px;background:#d4d4d4"></div>
<div style="left:717px;top:395px;width:1px;height:20px;background:#d4d4d4"></div>
<div style="left:862px;top:395px;width:1px;height:20px;background:#d4d4d4"></div>
<div style="left:972px;top:395px;width:1px;height:20px;background:#d4d4d4"></div>
<div style="left:1033px;top:395px;width:1px;height:20px;background:#d4d4d4"></div>
<div style="left:352px;top:416px;width:1px;height:20px;background:#d4d4d4"></div>
<div style="left:462px;top:416px;width:1px;height:20px;background:#d4d4d4"></div>
<div style="left:572px;top:416px;width:1px;height:20px;background:#d4d4d4"></div>
<div style="left:717px;top:416px;width:1px;height:20px;background:#d4d4d4"></div>
<div style="left:862px;top:416px;width:1px;height:20px;background:#d4d4d4"></div>
<div style="left:972px;top:416px;width:1px;height:20px;background:#d4d4d4"></div>
<div style="left:1033px;top:416px;width:1px;height:20px;background:#d4d4d4"></div>
<div style="left:67px;top:437px;width:1px;height:20px;background:#d4d4d4"></div>
<div style="left:352px;top:437px;width:1px;height:20px;background:#d4d4d4"></div>
<div style="left:462px;top:437px;width:1px;height:20px;background:#d4d4d4"></div>
<div style="left:572px;top:437px;width:1px;height:20px;background:#d4d4d4"></div>
<div style="left:717px;top:437px;width:1px;height:20px;background:#d4d4d4"></div>
<div style="left:862px;top:437px;width:1px;height:20px;background:#d4d4d4"></div>
<div style="left:972px;top:437px;width:1px;height:20px;background:#d4d4d4"></div>
<div style="left:1033px;top:437px;width:1px;height:20px;background:#d4d4d4"></div>
<div style="left:67px;top:458px;width:1px;height:20px;background:#000"></div>
<div style="left:352px;top:458px;width:1px;height:20px;background:#000"></div>
<div style="left:462px;top:458px;width:1px;height:20px;background:#000"></div>
<div style="left:572px;top:458px;width:1px;height:20px;background:#000"></div>
<div style="left:717px;top:458px;width:1px;height:20px;background:#000"></div>
<div style="left:862px;top:458px;width:1px;height:20px;background:#000"></div>
<div style="left:972px;top:458px;width:1px;height:20px;background:#000"></div>
<div style="left:1033px;top:458px;width:1px;height:20px;background:#d4d4d4"></div>
<div style="left:67px;top:479px;width:1px;height:19px;background:#000"></div>
<div style="left:352px;top:479px;width:1px;height:19px;background:#000"></div>
<div style="left:462px;top:479px;width:1px;height:19px;background:#000"></div>
<div style="left:572px;top:479px;width:1px;height:19px;background:#000"></div>
<div style="left:717px;top:479px;width:1px;height:19px;background:#000"></div>
<div style="left:862px;top:479px;width:1px;height:19px;background:#000"></div>
<div style="left:972px;top:479px;width:1px;height:19px;background:#000"></div>
<div style="left:1033px;top:479px;width:1px;height:19px;background:#d4d4d4"></div>
<div style="left:67px;top:499px;width:1px;height:19px;background:#000"></div>
<div style="left:352px;top:499px;width:1px;height:19px;background:#000"></div>
<div style="left:462px;top:499px;width:1px;height:19px;background:#000"></div>
<div style="left:572px;top:499px;width:1px;height:19px;background:#000"></div>
<div style="left:717px;top:499px;width:1px;height:19px;background:#000"></div>
<div style="left:862px;top:499px;width:1px;height:19px;background:#000"></div>
<div style="left:972px;top:499px;width:1px;height:19px;background:#000"></div>
<div style="left:1033px;top:499px;width:1px;height:19px;background:#d4d4d4"></div>
<div style="left:67px;top:519px;width:1px;height:19px;background:#000"></div>
<div style="left:352px;top:519px;width:1px;height:19px;background:#000"></div>
<div style="left:462px;top:519px;width:1px;height:19px;background:#000"></div>
<div style="left:572px;top:519px;width:1px;height:19px;background:#000"></div>
<div style="left:717px;top:519px;width:1px;height:19px;background:#000"></div>
<div style="left:862px;top:519px;width:1px;height:19px;background:#000"></div>
<div style="left:972px;top:519px;width:1px;height:19px;background:#000"></div>
<div style="left:1033px;top:519px;width:1px;height:19px;background:#d4d4d4"></div>
<div style="left:67px;top:539px;width:1px;height:19px;background:#000"></div>
<div style="left:352px;top:539px;width:1px;height:19px;background:#000"></div>
<div style="left:462px;top:539px;width:1px;height:19px;background:#000"></div>
<div style="left:572px;top:539px;width:1px;height:19px;background:#000"></div>
<div style="left:717px;top:539px;width:1px;height:19px;background:#000"></div>
<div style="left:862px;top:539px;width:1px;height:19px;background:#000"></div>
<div style="left:972px;top:539px;width:1px;height:19px;background:#000"></div>
<div style="left:1033px;top:539px;width:1px;height:19px;background:#d4d4d4"></div>
<div style="left:67px;top:559px;width:1px;height:19px;background:#000"></div>
<div style="left:352px;top:559px;width:1px;height:19px;background:#000"></div>
<div style="left:462px;top:559px;width:1px;height:19px;background:#000"></div>
<div style="left:572px;top:559px;width:1px;height:19px;background:#000"></div>
<div style="left:717px;top:559px;width:1px;height:19px;background:#000"></div>
<div style="left:862px;top:559px;width:1px;height:19px;background:#000"></div>
<div style="left:972px;top:559px;width:1px;height:19px;background:#000"></div>
<div style="left:1033px;top:559px;width:1px;height:19px;background:#d4d4d4"></div>
<div style="left:67px;top:579px;width:1px;height:19px;background:#000"></div>
<div style="left:352px;top:579px;width:1px;height:19px;background:#000"></div>
<div style="left:462px;top:579px;width:1px;height:19px;background:#000"></div>
<div style="left:572px;top:579px;width:1px;height:19px;background:#000"></div>
<div style="left:717px;top:579px;width:1px;height:19px;background:#000"></div>
<div style="left:862px;top:579px;width:1px;height:19px;background:#000"></div>
<div style="left:972px;top:579px;width:1px;height:19px;background:#000"></div>
<div style="left:1033px;top:579px;width:1px;height:19px;background:#d4d4d4"></div>
<div style="left:717px;top:599px;width:1px;height:19px;background:#000"></div>
<div style="left:972px;top:599px;width:1px;height:19px;background:#000"></div>
<div style="left:1033px;top:599px;width:1px;height:19px;background:#d4d4d4"></div>
<div style="left:717px;top:619px;width:1px;height:19px;background:#000"></div>
<div style="left:972px;top:619px;width:1px;height:19px;background:#000"></div>
<div style="left:1033px;top:619px;width:1px;height:19px;background:#d4d4d4"></div>
<div style="left:717px;top:639px;width:1px;height:19px;background:#000"></div>
<div style="left:972px;top:639px;width:1px;height:19px;background:#000"></div>
<div style="left:1033px;top:639px;width:1px;height:19px;background:#d4d4d4"></div>
<div style="left:972px;top:659px;width:1px;height:19px;background:#000"></div>
<div style="left:1033px;top:659px;width:1px;height:19px;background:#d4d4d4"></div>
<div style="left:67px;top:679px;width:1px;height:19px;background:#d4d4d4"></div>
<div style="left:352px;top:679px;width:1px;height:19px;background:#d4d4d4"></div>
<div style="left:462px;top:679px;width:1px;height:19px;background:#d4d4d4"></div>
<div style="left:572px;top:679px;width:1px;height:19px;background:#d4d4d4"></div>
<div style="left:717px;top:679px;width:1px;height:19px;background:#d4d4d4"></div>
<div style="left:862px;top:679px;width:1px;height:19px;background:#d4d4d4"></div>
<div style="left:972px;top:679px;width:1px;height:19px;background:#d4d4d4"></div>
<div style="left:1033px;top:679px;width:1px;height:19px;background:#d4d4d4"></div>
<div style="left:67px;top:699px;width:1px;height:19px;background:#d4d4d4"></div>
<div style="left:352px;top:699px;width:1px;height:19px;background:#d4d4d4"></div>
<div style="left:462px;top:699px;width:1px;height:19px;background:#d4d4d4"></div>
<div style="left:572px;top:699px;width:1px;height:19px;background:#d4d4d4"></div>
<div style="left:717px;top:699px;width:1px;height:19px;background:#d4d4d4"></div>
<div style="left:862px;top:699px;width:1px;height:19px;background:#d4d4d4"></div>
<div style="left:972px;top:699px;width:1px;height:19px;background:#d4d4d4"></div>
<div style="left:1033px;top:699px;width:1px;height:19px;background:#d4d4d4"></div>
<div style="left:67px;top:719px;width:1px;height:19px;background:#d4d4d4"></div>
<div style="left:352px;top:719px;width:1px;height:19px;background:#d4d4d4"></div>
<div style="left:462px;top:719px;width:1px;height:19px;background:#d4d4d4"></div>
<div style="left:572px;top:719px;width:1px;height:19px;background:#d4d4d4"></div>
<div style="left:717px;top:719px;width:1px;height:19px;background:#d4d4d4"></div>
<div style="left:862px;top:719px;width:1px;height:19px;background:#d4d4d4"></div>
<div style="left:972px;top:719px;width:1px;height:19px;background:#d4d4d4"></div>
<div style="left:1033px;top:719px;width:1px;height:19px;background:#d4d4d4"></div>
<div style="left:67px;top:739px;width:1px;height:19px;background:#d4d4d4"></div>
<div style="left:352px;top:739px;width:1px;height:19px;background:#d4d4d4"></div>
<div style="left:462px;top:739px;width:1px;height:19px;background:#d4d4d4"></div>
<div style="left:572px;top:739px;width:1px;height:19px;background:#d4d4d4"></div>
<div style="left:717px;top:739px;width:1px;height:19px;background:#d4d4d4"></div>
<div style="left:862px;top:739px;width:1px;height:19px;background:#d4d4d4"></div>
<div style="left:972px;top:739px;width:1px;height:19px;background:#d4d4d4"></div>
<div style="left:1033px;top:739px;width:1px;height:19px;background:#d4d4d4"></div>
<div style="left:67px;top:759px;width:1px;height:19px;background:#d4d4d4"></div>
<div style="left:352px;top:759px;width:1px;height:19px;background:#d4d4d4"></div>
<div style="left:462px;top:759px;width:1px;height:19px;background:#d4d4d4"></div>
<div style="left:572px;top:759px;width:1px;height:19px;background:#d4d4d4"></div>
<div style="left:717px;top:759px;width:1px;height:19px;background:#d4d4d4"></div>
<div style="left:862px;top:759px;width:1px;height:19px;background:#d4d4d4"></div>
<div style="left:972px;top:759px;width:1px;height:19px;background:#d4d4d4"></div>
<div style="left:1033px;top:759px;width:1px;height:19px;background:#d4d4d4"></div>
<div style="left:67px;top:779px;width:1px;height:8px;background:#d4d4d4"></div>
<div style="left:352px;top:779px;width:1px;height:8px;background:#d4d4d4"></div>
<div style="left:462px;top:779px;width:1px;height:8px;background:#d4d4d4"></div>
<div style="left:572px;top:779px;width:1px;height:8px;background:#d4d4d4"></div>
<div style="left:717px;top:779px;width:1px;height:8px;background:#d4d4d4"></div>
<div style="left:862px;top:779px;width:1px;height:8px;background:#d4d4d4"></div>
<div style="left:972px;top:779px;width:1px;height:8px;background:#d4d4d4"></div>
<div style="left:1033px;top:779px;width:1px;height:8px;background:#d4d4d4"></div>
<div style="left:28px;top:238px;width:1023px;height:1px;background:#d4d4d4"></div>
<div style="left:28px;top:259px;width:1023px;height:1px;background:#d4d4d4"></div>
<div style="left:28px;top:280px;width:1023px;height:1px;background:#d4d4d4"></div>
<div style="left:28px;top:310px;width:1023px;height:1px;background:#d4d4d4"></div>
<div style="left:28px;top:331px;width:1023px;height:1px;background:#d4d4d4"></div>
<div style="left:28px;top:352px;width:1023px;height:1px;background:#d4d4d4"></div>
<div style="left:28px;top:373px;width:1023px;height:1px;background:#d4d4d4"></div>
<div style="left:28px;top:394px;width:1023px;height:1px;background:#d4d4d4"></div>
<div style="left:28px;top:415px;width:1023px;height:1px;background:#d4d4d4"></div>
<div style="left:28px;top:436px;width:1023px;height:1px;background:#d4d4d4"></div>
<div style="left:28px;top:457px;width:945px;height:1px;background:#000"></div>
<div style="left:973px;top:457px;width:78px;height:1px;background:#d4d4d4"></div>
<div style="left:28px;top:478px;width:945px;height:1px;background:#000"></div>
<div style="left:973px;top:478px;width:78px;height:1px;background:#d4d4d4"></div>
<div style="left:28px;top:498px;width:945px;height:1px;background:#000"></div>
<div style="left:973px;top:498px;width:78px;height:1px;background:#d4d4d4"></div>
<div style="left:28px;top:518px;width:945px;height:1px;background:#000"></div>
<div style="left:973px;top:518px;width:78px;height:1px;background:#d4d4d4"></div>
<div style="left:28px;top:538px;width:945px;height:1px;background:#000"></div>
<div style="left:973px;top:538px;width:78px;height:1px;background:#d4d4d4"></div>
<div style="left:28px;top:558px;width:945px;height:1px;background:#000"></div>
<div style="left:973px;top:558px;width:78px;height:1px;background:#d4d4d4"></div>
<div style="left:28px;top:578px;width:945px;height:1px;background:#000"></div>
<div style="left:973px;top:578px;width:78px;height:1px;background:#d4d4d4"></div>
<div style="left:28px;top:598px;width:945px;height:1px;background:#000"></div>
<div style="left:973px;top:598px;width:78px;height:1px;background:#d4d4d4"></div>
<div style="left:28px;top:618px;width:945px;height:1px;background:#000"></div>
<div style="left:973px;top:618px;width:78px;height:1px;background:#d4d4d4"></div>
<div style="left:28px;top:638px;width:945px;height:1px;background:#000"></div>
<div style="left:973px;top:638px;width:78px;height:1px;background:#d4d4d4"></div>
<div style="left:28px;top:658px;width:945px;height:1px;background:#000"></div>
<div style="left:973px;top:658px;width:78px;height:1px;background:#d4d4d4"></div>
<div style="left:28px;top:678px;width:945px;height:1px;background:#000"></div>
<div style="left:973px;top:678px;width:78px;height:1px;background:#d4d4d4"></div>
<div style="left:28px;top:698px;width:1023px;height:1px;background:#d4d4d4"></div>
<div style="left:28px;top:718px;width:1023px;height:1px;background:#d4d4d4"></div>
<div style="left:28px;top:738px;width:1023px;height:1px;background:#d4d4d4"></div>
<div style="left:28px;top:758px;width:1023px;height:1px;background:#d4d4d4"></div>
<div style="left:28px;top:778px;width:1023px;height:1px;background:#d4d4d4"></div>
<div style="left:2px;top:217px;width:1050px;height:1px;background:#ababab"></div>
<div style="left:27px;top:198px;width:1px;height:589px;background:#ababab"></div>
<div style="left:1051px;top:217px;width:1px;height:571px;background:#ababab"></div>
<div style="left:2px;top:238px;width:25px;height:1px;background:#c6c6c6"></div>
<div style="left:2px;top:259px;width:25px;height:1px;background:#c6c6c6"></div>
<div style="left:2px;top:280px;width:25px;height:1px;background:#c6c6c6"></div>
<div style="left:2px;top:310px;width:25px;height:1px;background:#c6c6c6"></div>
<div style="left:2px;top:331px;width:25px;height:1px;background:#c6c6c6"></div>
<div style="left:2px;top:352px;width:25px;height:1px;background:#c6c6c6"></div>
<div style="left:2px;top:373px;width:25px;height:1px;background:#c6c6c6"></div>
<div style="left:2px;top:394px;width:25px;height:1px;background:#c6c6c6"></div>
<div style="left:2px;top:415px;width:25px;height:1px;background:#c6c6c6"></div>
<div style="left:2px;top:436px;width:25px;height:1px;background:#c6c6c6"></div>
<div style="left:2px;top:457px;width:25px;height:1px;background:#c6c6c6"></div>
<div style="left:2px;top:478px;width:25px;height:1px;background:#c6c6c6"></div>
<div style="left:2px;top:498px;width:25px;height:1px;background:#c6c6c6"></div>
<div style="left:2px;top:518px;width:25px;height:1px;background:#c6c6c6"></div>
<div style="left:2px;top:538px;width:25px;height:1px;background:#c6c6c6"></div>
<div style="left:2px;top:558px;width:25px;height:1px;background:#c6c6c6"></div>
<div style="left:2px;top:578px;width:25px;height:1px;background:#c6c6c6"></div>
<div style="left:2px;top:598px;width:25px;height:1px;background:#c6c6c6"></div>
<div style="left:2px;top:618px;width:25px;height:1px;background:#c6c6c6"></div>
<div style="left:2px;top:638px;width:25px;height:1px;background:#c6c6c6"></div>
<div style="left:2px;top:658px;width:25px;height:1px;background:#c6c6c6"></div>
<div style="left:2px;top:678px;width:25px;height:1px;background:#c6c6c6"></div>
<div style="left:2px;top:698px;width:25px;height:1px;background:#c6c6c6"></div>
<div style="left:2px;top:718px;width:25px;height:1px;background:#c6c6c6"></div>
<div style="left:2px;top:738px;width:25px;height:1px;background:#c6c6c6"></div>
<div style="left:2px;top:758px;width:25px;height:1px;background:#c6c6c6"></div>
<div style="left:2px;top:778px;width:25px;height:1px;background:#c6c6c6"></div>
<div style="left:67px;top:198px;width:1px;height:19px;background:#c6c6c6"></div>
<div style="left:352px;top:198px;width:1px;height:19px;background:#c6c6c6"></div>
<div style="left:462px;top:198px;width:1px;height:19px;background:#c6c6c6"></div>
<div style="left:572px;top:198px;width:1px;height:19px;background:#c6c6c6"></div>
<div style="left:717px;top:198px;width:1px;height:19px;background:#c6c6c6"></div>
<div style="left:862px;top:198px;width:1px;height:19px;background:#c6c6c6"></div>
<div style="left:972px;top:198px;width:1px;height:19px;background:#c6c6c6"></div>
<div style="left:1033px;top:198px;width:1px;height:19px;background:#c6c6c6"></div>
<div style="left:572px;top:198px;width:145px;height:18px;background:#d2d2d2"></div>
<div style="left:572px;top:198px;width:1px;height:19px;background:#ababab"></div>
<div style="left:717px;top:198px;width:1px;height:19px;background:#ababab"></div>
<div style="left:572px;top:216px;width:146px;height:2px;background:#217346"></div>
<svg style="left:12px;top:203px" width="13" height="12"><polygon points="12,0 12,11 0,11" fill="#b4b4b4"/></svg>
<div class="ui" style="left:27px;top:201px;width:40px;text-align:center;font-size:13px;color:#222">A</div>
<div class="ui" style="left:67px;top:201px;width:285px;text-align:center;font-size:13px;color:#222">B</div>
<div class="ui" style="left:352px;top:201px;width:110px;text-align:center;font-size:13px;color:#222">C</div>
<div class="ui" style="left:462px;top:201px;width:110px;text-align:center;font-size:13px;color:#222">D</div>
<div class="ui" style="left:572px;top:201px;width:145px;text-align:center;font-size:13px;color:#217346">E</div>
<div class="ui" style="left:717px;top:201px;width:145px;text-align:center;font-size:13px;color:#222">F</div>
<div class="ui" style="left:862px;top:201px;width:110px;text-align:center;font-size:13px;color:#222">G</div>
<div class="ui" style="left:972px;top:201px;width:61px;text-align:center;font-size:13px;color:#222">H</div>
<div class="ui" style="left:2px;top:222px;width:26px;text-align:center;font-size:13px;color:#222">1</div>
<div class="ui" style="left:2px;top:243px;width:26px;text-align:center;font-size:13px;color:#222">2</div>
<div class="ui" style="left:2px;top:264px;width:26px;text-align:center;font-size:13px;color:#222">3</div>
<div class="ui" style="left:2px;top:294px;width:26px;text-align:center;font-size:13px;color:#222">4</div>
<div class="ui" style="left:2px;top:315px;width:26px;text-align:center;font-size:13px;color:#222">5</div>
<div class="ui" style="left:2px;top:336px;width:26px;text-align:center;font-size:13px;color:#222">6</div>
<div class="ui" style="left:2px;top:357px;width:26px;text-align:center;font-size:13px;color:#222">7</div>
<div class="ui" style="left:2px;top:378px;width:26px;text-align:center;font-size:13px;color:#222">8</div>
<div class="ui" style="left:2px;top:399px;width:26px;text-align:center;font-size:13px;color:#222">9</div>
<div class="ui" style="left:2px;top:420px;width:26px;text-align:center;font-size:13px;color:#222">10</div>
<div class="ui" style="left:2px;top:441px;width:26px;text-align:center;font-size:13px;color:#222">11</div>
<div class="ui" style="left:2px;top:462px;width:26px;text-align:center;font-size:13px;color:#222">12</div>
<div class="ui" style="left:2px;top:482px;width:26px;text-align:center;font-size:13px;color:#222">13</div>
<div class="ui" style="left:2px;top:502px;width:26px;text-align:center;font-size:13px;color:#222">14</div>
<div class="ui" style="left:2px;top:522px;width:26px;text-align:center;font-size:13px;color:#222">15</div>
<div class="ui" style="left:2px;top:542px;width:26px;text-align:center;font-size:13px;color:#222">16</div>
<div class="ui" style="left:2px;top:562px;width:26px;text-align:center;font-size:13px;color:#222">17</div>
<div class="ui" style="left:2px;top:582px;width:26px;text-align:center;font-size:13px;color:#222">18</div>
<div class="ui" style="left:2px;top:602px;width:26px;text-align:center;font-size:13px;color:#222">19</div>
<div class="ui" style="left:2px;top:622px;width:26px;text-align:center;font-size:13px;color:#222">20</div>
<div class="ui" style="left:2px;top:642px;width:26px;text-align:center;font-size:13px;color:#222">21</div>
<div class="ui" style="left:2px;top:662px;width:26px;text-align:center;font-size:13px;color:#222">22</div>
<div class="ui" style="left:2px;top:682px;width:26px;text-align:center;font-size:13px;color:#222">23</div>
<div class="ui" style="left:2px;top:702px;width:26px;text-align:center;font-size:13px;color:#222">24</div>
<div class="ui" style="left:2px;top:722px;width:26px;text-align:center;font-size:13px;color:#222">25</div>
<div class="ui" style="left:2px;top:742px;width:26px;text-align:center;font-size:13px;color:#222">26</div>
<div class="ui" style="left:2px;top:762px;width:26px;text-align:center;font-size:13px;color:#222">27</div>
<div class="ui" style="left:2px;top:783px;width:26px;text-align:center;font-size:13px;color:#222;height:4px;overflow:hidden">28</div>
<div style="left:2px;top:59px;width:1px;height:92px;background:#fff"></div>
<div style="left:1072px;top:59px;width:1px;height:92px;background:#fff"></div>
<div style="left:2px;top:152px;width:1px;height:685px;background:rgba(255,255,255,0.55)"></div>
<div style="left:1072px;top:152px;width:1px;height:685px;background:rgba(255,255,255,0.55)"></div>
<div style="left:2px;top:836px;width:1071px;height:1px;background:rgba(255,255,255,0.55)"></div>
</body></html>
